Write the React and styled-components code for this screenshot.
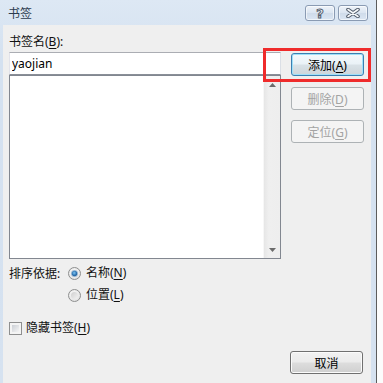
import React from 'react';
import styled, { createGlobalStyle, css } from 'styled-components';

const GlobalStyle = createGlobalStyle`
  html, body { margin: 0; padding: 0; background: #fcfcfc; }
  body {
    font-family: "Noto Sans", "Noto Sans CJK SC", sans-serif;
    font-size: 12px;
    color: #111;
  }
`;

const Page = styled.div`
  display: flex;
  width: 383px;
  height: 383px;
  overflow: hidden;
`;

const Window = styled.div`
  flex: none;
  width: 376px;
  box-sizing: border-box;
  padding: 0 5px 0 3px;
  display: flex;
  flex-direction: column;
  background: linear-gradient(#dde8f4, #d4e1f0 60px, #d6e2f0);
`;

const Edge = styled.div`
  flex: none;
  width: 1px;
  background: #5c5c5c;
`;

const TitleBar = styled.div`
  height: 25px;
  flex: none;
  display: flex;
  justify-content: space-between;
  align-items: flex-start;
  padding: 0 3px 0 5px;
`;

const Title = styled.span`
  margin-top: 7px;
  line-height: 13px;
  font-size: 12px;
  color: #2b3a4d;
`;

const Captions = styled.div`
  display: flex;
  gap: 3px;
  margin-top: 5px;
`;

const CaptionButton = styled.div`
  width: 30px;
  height: 16px;
  box-sizing: border-box;
  border: 1px solid #8a9bb3;
  border-radius: 3px;
  background: linear-gradient(#eef3f9, #dbe5f1 50%, #cfdbea 51%, #dbe6f3);
  box-shadow: inset 0 0 0 1px rgba(255, 255, 255, 0.6);
  display: flex;
  align-items: center;
  justify-content: center;
`;

const HelpGlyph = styled.span`
  font-family: "DejaVu Sans", sans-serif;
  font-weight: bold;
  font-size: 13px;
  line-height: 13px;
  color: #f4f6f9;
  -webkit-text-stroke: 1px #55606e;
`;

const Body = styled.div`
  flex: 1;
  background: #efefef;
  padding: 10px 7px 0 6px;
  display: flex;
  flex-direction: column;
`;

const MainGrid = styled.div`
  display: grid;
  grid-template-columns: 272px 73px;
  column-gap: 10px;
  align-items: start;
`;

const LeftCol = styled.div`
  display: flex;
  flex-direction: column;
`;

const RightCol = styled.div`
  display: flex;
  flex-direction: column;
  gap: 10px;
  margin-top: 18px;
  & > :nth-child(2) { margin-top: 1px; }
`;

const Label = styled.div`
  line-height: 14px;
  white-space: nowrap;
  u { text-underline-offset: 2px; }
`;

const NameInput = styled.input`
  margin: 3px 0 0;
  height: 23px;
  box-sizing: border-box;
  border: 1px solid #abadb3;
  border-color: #abadb3 #dbdfe6 #8a8f98 #e2e3ea;
  padding: 0 2px;
  font-family: "Noto Sans", "Noto Sans CJK SC", sans-serif;
  font-size: 12px;
  color: #000;
  background: #fff;
  outline: none;
`;

const ListBox = styled.div`
  height: 184px;
  box-sizing: border-box;
  border: 1px solid #828790;
  display: flex;
  background: #fff;
`;

const ListArea = styled.div`
  flex: 1;
`;

const ScrollBar = styled.div`
  width: 17px;
  box-sizing: border-box;
  border-left: 1px solid #f7f7f7;
  background: linear-gradient(to right, #e6e6e6, #efefef 30%, #eeeeee);
  display: flex;
  flex-direction: column;
  justify-content: space-between;
`;

const ArrowBox = styled.div`
  height: 17px;
  display: flex;
  align-items: center;
  justify-content: center;
`;

const SortGrid = styled.div`
  margin-top: 6px;
  display: grid;
  grid-template-columns: 59px auto;
  grid-auto-rows: 16px;
  row-gap: 6px;
  align-items: center;
  & > span:first-child { grid-row: 1; }
`;

const Option = styled.label`
  grid-column: 2;
  display: flex;
  align-items: center;
  gap: 5px;
  line-height: 16px;
  white-space: nowrap;
  u { text-underline-offset: 2px; }
`;

const Radio = styled.span`
  width: 13px;
  height: 13px;
  box-sizing: border-box;
  border-radius: 50%;
  border: 1px solid #8e8f8f;
  background: radial-gradient(circle at 45% 40%, #ffffff, #e4e4e4 70%, #d2d2d2);
  display: flex;
  align-items: center;
  justify-content: center;
  &::after {
    content: '';
    width: 7px;
    height: 7px;
    border-radius: 50%;
    background: ${p => (p.$checked
      ? 'radial-gradient(circle at 45% 40%, #7cc4f2, #2a6fae 55%, #174a7c)'
      : 'linear-gradient(135deg, #cfcfcf, #f2f2f2)')};
    box-shadow: ${p => (p.$checked ? '0 0 0 1px #9fb9d2' : 'none')};
    transform: scale(${p => (p.$checked ? 0.78 : 1)});
  }
`;

const CheckRow = styled.label`
  margin-top: 17px;
  display: flex;
  align-items: center;
  gap: 4px;
  line-height: 16px;
  u { text-underline-offset: 2px; }
`;

const CheckBox = styled.span`
  width: 13px;
  height: 13px;
  box-sizing: border-box;
  border: 1px solid #8e8f8f;
  background: #f4f4f4;
  padding: 2px;
  &::after {
    content: '';
    display: block;
    width: 100%;
    height: 100%;
    background: linear-gradient(135deg, #cbcfd5, #f5f5f5);
  }
`;

const AddWrap = styled.div`
  position: relative;
`;

const Highlight = styled.div`
  position: absolute;
  top: -5px;
  left: -28px;
  right: -7px;
  bottom: -6px;
  border: 3px solid #ef2b2b;
  pointer-events: none;
`;

const Button = styled.button`
  width: 73px;
  height: 23px;
  box-sizing: border-box;
  padding: 0;
  font-family: "Noto Sans", "Noto Sans CJK SC", sans-serif;
  font-size: 12px;
  color: #000;
  border: 1px solid #707070;
  border-radius: 3px;
  background: linear-gradient(#f2f2f2 0%, #ebebeb 48%, #dddddd 52%, #cfcfcf 100%);
  box-shadow: inset 0 0 0 1px #fbfbfb;
  u { text-underline-offset: 2px; }
  ${p => p.$primary && css`
    border-color: #3c7fb1;
    box-shadow: inset 0 0 0 1px #9fe0f8;
    background: linear-gradient(#f4f9fc 0%, #eaf2f7 48%, #d9e2e7 52%, #cdd5da 100%);
  `}
  &:disabled {
    border-color: #adb2b5;
    background: #f4f4f4;
    box-shadow: none;
    color: #a3a3a3;
  }
`;

const Footer = styled.div`
  display: flex;
  justify-content: flex-end;
  padding: 15px 1px 0 0;
`;

function Arrow({ down }) {
  return (
    <svg width="7" height="4" viewBox="0 0 7 4">
      <path d={down ? 'M0 0h7L3.5 4z' : 'M0 4h7L3.5 0z'} fill="#6b6b6b" />
    </svg>
  );
}

export default function App() {
  return (
    <>
      <GlobalStyle />
      <Page>
        <Window>
          <TitleBar>
            <Title>书签</Title>
            <Captions>
              <CaptionButton><HelpGlyph>?</HelpGlyph></CaptionButton>
              <CaptionButton>
                <svg width="14" height="10" viewBox="0 0 14 10">
                  <path d="M2 1.5l10 7M12 1.5l-10 7" stroke="#4f5a68" strokeWidth="3.6" strokeLinecap="round" />
                  <path d="M2 1.5l10 7M12 1.5l-10 7" stroke="#f7f9fb" strokeWidth="1.6" strokeLinecap="round" />
                </svg>
              </CaptionButton>
            </Captions>
          </TitleBar>
          <Body>
            <MainGrid>
              <LeftCol>
                <Label>书签名(<u>B</u>):</Label>
                <NameInput defaultValue="yaojian" />
                <ListBox>
                  <ListArea />
                  <ScrollBar>
                    <ArrowBox><Arrow /></ArrowBox>
                    <ArrowBox><Arrow down /></ArrowBox>
                  </ScrollBar>
                </ListBox>
                <SortGrid>
                  <span>排序依据:</span>
                  <Option><Radio $checked /><span>名称(<u>N</u>)</span></Option>
                  <Option><Radio /><span>位置(<u>L</u>)</span></Option>
                </SortGrid>
                <CheckRow><CheckBox /><span>隐藏书签(<u>H</u>)</span></CheckRow>
              </LeftCol>
              <RightCol>
                <AddWrap>
                  <Button $primary>添加(<u>A</u>)</Button>
                  <Highlight />
                </AddWrap>
                <Button disabled>删除(<u>D</u>)</Button>
                <Button disabled>定位(<u>G</u>)</Button>
              </RightCol>
            </MainGrid>
            <Footer>
              <Button>取消</Button>
            </Footer>
          </Body>
        </Window>
        <Edge />
      </Page>
    </>
  );
}
